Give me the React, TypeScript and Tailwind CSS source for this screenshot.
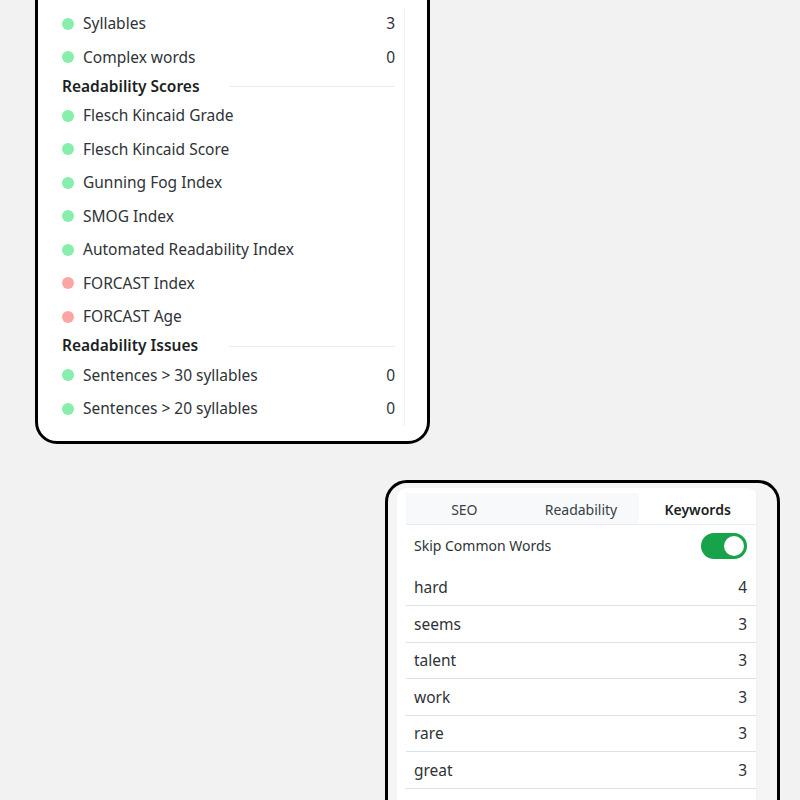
import { useState } from "react";

const font = { fontFamily: '"Noto Sans", "Open Sans", sans-serif' };

type Stat = { label: string; value?: string; bad?: boolean };

const basics: Stat[] = [
  { label: "Syllables", value: "3" },
  { label: "Complex words", value: "0" },
];

const scores: Stat[] = [
  { label: "Flesch Kincaid Grade" },
  { label: "Flesch Kincaid Score" },
  { label: "Gunning Fog Index" },
  { label: "SMOG Index" },
  { label: "Automated Readability Index" },
  { label: "FORCAST Index", bad: true },
  { label: "FORCAST Age", bad: true },
];

const issues: Stat[] = [
  { label: "Sentences > 30 syllables", value: "0" },
  { label: "Sentences > 20 syllables", value: "0" },
];

const keywords = [
  { word: "hard", count: 4 },
  { word: "seems", count: 3 },
  { word: "talent", count: 3 },
  { word: "work", count: 3 },
  { word: "rare", count: 3 },
  { word: "great", count: 3 },
  { word: "luck", count: 2 },
];

function StatRow({ stat }: { stat: Stat }) {
  return (
    <div className="flex h-[33.5px] items-center text-[15.5px] text-[#2f3337]">
      <span
        className={`mr-[9px] h-3 w-3 shrink-0 rounded-full ${stat.bad ? "bg-[#fca5a5]" : "bg-[#86efac]"}`}
      ></span>
      <span className="flex-1">{stat.label}</span>
      {stat.value && <span>{stat.value}</span>}
    </div>
  );
}

function Heading({ title }: { title: string }) {
  return (
    <div className="flex h-[25px] items-center">
      <span className="w-[167px] shrink-0 text-[15.5px] font-semibold text-[#1c1f23]">{title}</span>
      <span className="h-px flex-1 bg-[#ececec]"></span>
    </div>
  );
}

function ReadabilityCard() {
  return (
    <div className="-mt-[30px] ml-[35px] w-[395px] rounded-[22px] border-[3px] border-black bg-white pb-[15px] pt-[34px]">
      <div className="mr-[22px] border-r border-[#f0f0f0] pl-[24px] pr-[9px]">
        {basics.map((s) => (
          <StatRow key={s.label} stat={s} />
        ))}
        <Heading title="Readability Scores" />
        {scores.map((s) => (
          <StatRow key={s.label} stat={s} />
        ))}
        <Heading title="Readability Issues" />
        {issues.map((s) => (
          <StatRow key={s.label} stat={s} />
        ))}
      </div>
    </div>
  );
}

function KeywordsCard() {
  const [skip, setSkip] = useState(true);
  const tabs = ["SEO", "Readability", "Keywords"];

  return (
    <div className="ml-[385px] mt-[36px] h-[400px] w-[395px] rounded-[22px] border-[3px] border-black bg-[#f5f5f5] pl-[9px] pr-[20px] pt-[5px]">
      <div className="h-full rounded-t-[10px] bg-white pl-[9px] pt-[5px]">
        <div className="border-r border-[#f0f0f0]">
          <div className="grid grid-cols-3 border-b border-[#e8ecf0] text-[14px]">
            {tabs.map((t) => (
              <div
                key={t}
                className={`flex h-[31px] items-center justify-center pt-[3px] ${
                  t === "Keywords" ? "bg-white font-semibold text-[#1c1f23]" : "bg-[#f7f9fb] text-[#3a3f45]"
                }`}
              >
                {t}
              </div>
            ))}
          </div>
          <div className="flex h-[45px] items-center justify-between pb-[4px] pl-2 pr-[9px] text-[14px] text-[#2f3337]">
            <span>Skip Common Words</span>
            <button
              onClick={() => setSkip(!skip)}
              className={`mt-[2px] flex h-[26px] w-[46px] items-center rounded-full p-[3px] ${
                skip ? "justify-end bg-[#16a34a]" : "justify-start bg-gray-300"
              }`}
            >
              <span className="h-5 w-5 rounded-full bg-white"></span>
            </button>
          </div>
          {keywords.map((k) => (
            <div
              key={k.word}
              className="flex h-[36.5px] items-center justify-between border-b border-[#dbe2ea] pl-2 pr-[9px] pt-[1px] text-[15.5px] text-[#2f3337]"
            >
              <span>{k.word}</span>
              <span>{k.count}</span>
            </div>
          ))}
        </div>
      </div>
    </div>
  );
}

export default function App() {
  return (
    <div className="h-[800px] overflow-hidden bg-[#f2f2f2]" style={font}>
      <ReadabilityCard />
      <KeywordsCard />
    </div>
  );
}
